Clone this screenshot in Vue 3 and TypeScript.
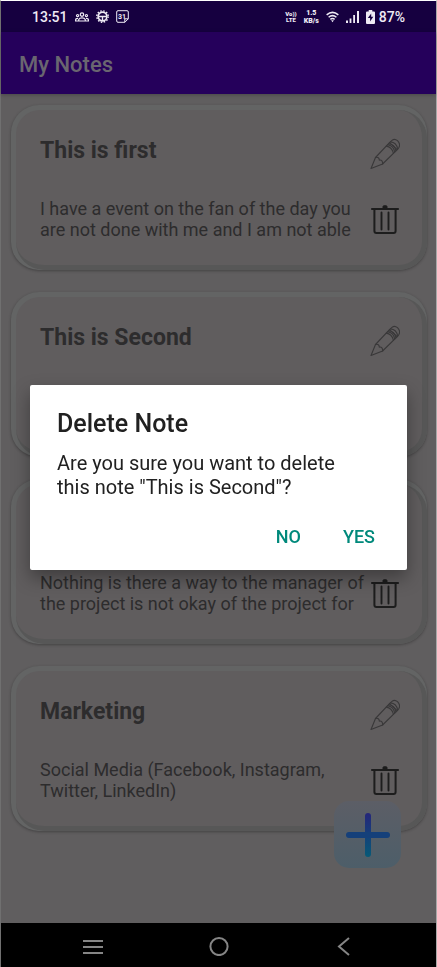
<script setup lang="ts">
import { ref } from 'vue'

interface Note {
  id: number
  title: string
  body: string
}

const notes = ref<Note[]>([
  { id: 1, title: 'This is first', body: 'I have a event on the fan of the day you are not done with me and I am not able' },
  { id: 2, title: 'This is Second', body: '' },
  { id: 3, title: '', body: 'Nothing is there a way to the manager of the project is not okay of the project for' },
  { id: 4, title: 'Marketing', body: 'Social Media (Facebook, Instagram, Twitter, LinkedIn)' },
])

const pending = ref<Note | null>(notes.value[1])

function confirmDelete(): void {
  notes.value = notes.value.filter((n) => n.id !== pending.value?.id)
  pending.value = null
}
</script>

<template>
  <div class="screen">
    <div class="status">
      <div class="status-group">
        <span class="clock">13:51</span>
        <svg class="people" viewBox="0 0 14 10" fill="none" stroke="currentColor" stroke-width="1.2">
          <circle cx="7" cy="2.6" r="1.7" />
          <circle cx="2.6" cy="3.6" r="1.1" />
          <circle cx="11.4" cy="3.6" r="1.1" />
          <path d="M3.7 9V7.6Q4.5 5.8 7 5.8T10.3 7.6V9ZM3 6.3Q.6 6.3.6 8V9H3.5M11 6.3Q13.4 6.3 13.4 8V9H10.5" />
        </svg>
        <svg class="gear" viewBox="0 0 14 14" fill="none" stroke="currentColor">
          <circle cx="7" cy="7" r="4.7" stroke-width="1.7" />
          <circle cx="7" cy="7" r="6.1" stroke-width="1.6" stroke-dasharray="1.6 1.6" />
          <path d="M2.5 7H11.5M7 7V11.5" stroke-width="1.4" />
        </svg>
        <span class="calendar">
          <svg viewBox="0 0 13 13" fill="none" stroke="currentColor">
            <path d="M2 .7H11Q12.3.7 12.3 2V8.8L8.8 12.3H2Q.7 12.3.7 11V2Q.7.7 2 .7ZM8.8 12.3V8.8H12.3" />
          </svg>
          <span class="date">31</span>
        </span>
      </div>
      <div class="status-group right">
        <span class="stack"><span>Vo))</span><span>LTE</span></span>
        <span class="stack rate"><span>1.5</span><span>KB/s</span></span>
        <svg class="wifi" viewBox="0 0 14 12" fill="none" stroke="currentColor" stroke-width="1.6">
          <path d="M.7 3.7Q7-1.7 13.3 3.7M2.8 6.3Q7 2.7 11.2 6.3M4.7 8.6Q7 6.8 9.3 8.6" />
          <path d="M5.5 9.6H8.5L7 11.6Z" fill="currentColor" stroke="none" />
        </svg>
        <svg class="signal" viewBox="0 0 13 12" fill="currentColor">
          <path d="M0 9.5H2V12H0ZM3.6 7.5H5.4V12H3.6ZM7.2 4H9V12H7.2ZM11 0H13V12H11Z" />
        </svg>
        <svg class="battery" viewBox="0 0 9 14">
          <path d="M2.7 0H6.3V1.4H8Q9 1.4 9 2.4V13Q9 14 8 14H1Q0 14 0 13V2.4Q0 1.4 1 1.4H2.7Z" fill="currentColor" />
          <path class="bolt" d="M5.2 3.4L1.8 8H4.1V11.6L7.3 6.8H5.2Z" />
        </svg>
        <span class="percent">87%</span>
      </div>
    </div>

    <header class="app-bar"><h1>My Notes</h1></header>

    <main class="notes">
      <article v-for="note in notes" :key="note.id" class="card">
        <div class="face">
          <div class="text">
            <h2>{{ note.title }}</h2>
            <p>{{ note.body }}</p>
          </div>
          <div class="actions">
            <button type="button" aria-label="Edit note">
              <svg viewBox="0 0 30 32" fill="none" stroke="#393839" stroke-width="1.1" stroke-linejoin="round" stroke-linecap="round">
                <path d="M1 30.5L5.5 19.5L19.5 4.7L27.2 11.6L12.6 26Z" />
                <path d="M19.5 4.7L22.3 2.2Q24.5.2 27.5 2.7Q31 6.2 28.7 9.8L27.2 11.6" />
                <path d="M16.3 8.1Q21.8 8.8 23.4 15.2M17.5 6.8Q23.5 7.4 24.7 14M18.5 5.8Q24.7 6.2 25.9 12.8M20.5 3.9Q26.2 4.4 27.7 10.8" />
                <path d="M5.5 19.5Q9.2 18.6 9.3 22.1Q12.9 21.6 12.6 26" />
              </svg>
            </button>
            <button type="button" aria-label="Delete note" @click="pending = note">
              <svg viewBox="0 0 30 32" fill="none" stroke="#1d1d1d">
                <path d="M1.2 6H28.8" stroke-width="2" />
                <path d="M13 5V3.6Q13 2.8 13.8 2.8H16.2Q17 2.8 17 3.6V5Z" fill="#1d1d1d" />
                <path d="M4.4 6V28Q4.4 30 6.4 30H23.6Q25.6 30 25.6 28V6" stroke-width="2" />
                <path d="M11.5 9.5V26.5M18.5 9.5V26.5" stroke-width="1.9" stroke-linecap="round" />
              </svg>
            </button>
          </div>
        </div>
      </article>
      <button type="button" class="fab" aria-label="Add note">
        <svg viewBox="0 0 46 46">
          <defs>
            <linearGradient id="plus-shade" x1="0" y1="0" x2="0" y2="1">
              <stop offset="0" stop-color="#25267a" />
              <stop offset=".5" stop-color="#15407a" />
              <stop offset="1" stop-color="#075a77" />
            </linearGradient>
          </defs>
          <rect x="20" y="1" width="6" height="44" rx="3" fill="url(#plus-shade)" />
          <rect x="1" y="20" width="44" height="6" rx="3" fill="#15407a" />
        </svg>
      </button>
    </main>

    <nav class="nav">
      <button type="button" aria-label="Recent apps">
        <svg viewBox="0 0 20 20" fill="none" stroke="currentColor" stroke-width="2"><path d="M0 5H20M0 11H20M0 17H20" /></svg>
      </button>
      <button type="button" aria-label="Home">
        <svg viewBox="0 0 20 20" fill="none" stroke="currentColor" stroke-width="2"><circle cx="10" cy="10.5" r="8.6" /></svg>
      </button>
      <button type="button" aria-label="Back">
        <svg viewBox="0 0 20 20" fill="none" stroke="currentColor" stroke-width="2"><path d="M15 2L5 10.5L15 19" /></svg>
      </button>
    </nav>

    <div v-if="pending" class="overlay">
      <section class="dialog" role="dialog" aria-labelledby="dialog-title">
        <h2 id="dialog-title">Delete Note</h2>
        <p>Are you sure you want to delete this note "{{ pending.title }}"?</p>
        <div class="dialog-actions">
          <button type="button" @click="pending = null">NO</button>
          <button type="button" @click="confirmDelete">YES</button>
        </div>
      </section>
    </div>
  </div>
</template>

<style>
body {
  background: #605e5f;
}
</style>

<style scoped>
* {
  box-sizing: border-box;
}
h1, h2, p {
  margin: 0;
}
button {
  border: 0;
  padding: 0;
  background: none;
  font-family: inherit;
  color: inherit;
  cursor: pointer;
}
svg {
  display: block;
}
.screen {
  min-height: 100vh;
  display: flex;
  flex-direction: column;
  border-top: 1px solid #fff;
  border-left: 1px solid #707070;
  border-right: 1px solid #a8a8a8;
  background: #605e5f;
  font-family: Roboto, sans-serif;
}
.status {
  height: 31px;
  padding: 0 31px 0 31px;
  display: flex;
  align-items: center;
  justify-content: space-between;
  background: #160040;
  color: #eeeaf4;
}
.status-group {
  display: flex;
  align-items: center;
  gap: 7px;
}
.clock {
  font-size: 14px;
  font-weight: 500;
}
.percent {
  font-size: 14px;
  font-weight: 500;
  margin-left: -3px;
}
.people {
  width: 14px;
  height: 10px;
}
.gear {
  width: 13px;
  height: 13px;
}
.calendar {
  display: grid;
  place-items: center;
}
.calendar > * {
  grid-area: 1 / 1;
}
.calendar svg {
  width: 13px;
  height: 13px;
}
.date {
  font-size: 7px;
  line-height: 8px;
  font-weight: 700;
}
.stack {
  display: flex;
  flex-direction: column;
  align-items: center;
  font-size: 6px;
  line-height: 6px;
  font-weight: 900;
}
.rate {
  font-size: 7px;
  line-height: 8px;
}
.wifi {
  width: 13px;
  height: 12px;
}
.signal {
  width: 13px;
  height: 12px;
}
.battery {
  width: 9px;
  height: 14px;
}
.bolt {
  fill: #160040;
}
.app-bar {
  position: relative;
  height: 62px;
  padding: 4px 18px 0;
  display: flex;
  align-items: center;
  background: #25005b;
  box-shadow: 0 1px 4px rgba(0, 0, 0, 0.25);
}
.app-bar h1 {
  font-size: 22px;
  line-height: 28px;
  font-weight: 500;
  color: #6a6670;
}
.notes {
  position: relative;
  flex: 1;
  padding: 11px 9px 92px 10px;
  display: flex;
  flex-direction: column;
  gap: 22px;
}
.card {
  height: 165px;
  padding: 5px 0 0 5px;
  display: flex;
  border-radius: 28px;
  background: #636464;
  box-shadow: 0 1px 3px rgba(0, 0, 0, 0.3);
}
.face {
  flex: 1;
  padding: 25px 19px 20px 24px;
  display: flex;
  justify-content: space-between;
  border-right: 5px solid #575757;
  border-bottom: 5px solid #575757;
  border-radius: 24px 28px 28px 28px;
  background: #605d5e;
}
.text {
  flex: 1;
  display: grid;
  grid-template-rows: 32px 1fr;
  row-gap: 31px;
  color: #2d2c2d;
}
.text h2 {
  font-size: 23px;
  line-height: 32px;
  font-weight: 700;
}
.text p {
  font-size: 18px;
  line-height: 21px;
}
.actions {
  width: 36px;
  display: flex;
  flex-direction: column;
  align-items: center;
  gap: 33px;
  padding-top: 3px;
}
.actions svg {
  width: 30px;
  height: 32px;
}
.fab {
  position: absolute;
  right: 35px;
  bottom: 55px;
  width: 67px;
  height: 67px;
  display: grid;
  place-items: center;
  border-radius: 15px;
  background: linear-gradient(#5c5e66, #4d5e69);
}
.fab svg {
  width: 46px;
  height: 46px;
}
.nav {
  height: 44px;
  padding: 2px 82px 0;
  display: flex;
  align-items: center;
  justify-content: space-between;
  background: #000;
  color: #858585;
}
.nav svg {
  width: 20px;
  height: 20px;
}
.overlay {
  position: fixed;
  inset: 0;
  padding: 0 30px 12px;
  display: flex;
  align-items: center;
  justify-content: center;
}
.dialog {
  width: 100%;
  padding: 23px 18px 10px 27px;
  border-radius: 2px;
  background: #fff;
  color: #212121;
  box-shadow: 0 8px 18px rgba(0, 0, 0, 0.35);
}
.dialog h2 {
  font-size: 25px;
  line-height: 32px;
  font-weight: 500;
}
.dialog p {
  margin-top: 11px;
  padding-right: 30px;
  font-size: 20px;
  line-height: 24px;
}
.dialog-actions {
  margin-top: 13px;
  display: flex;
  justify-content: flex-end;
  gap: 14px;
}
.dialog-actions button {
  height: 48px;
  padding: 0 14px;
  font-size: 18px;
  font-weight: 500;
  color: #00897b;
}
</style>
